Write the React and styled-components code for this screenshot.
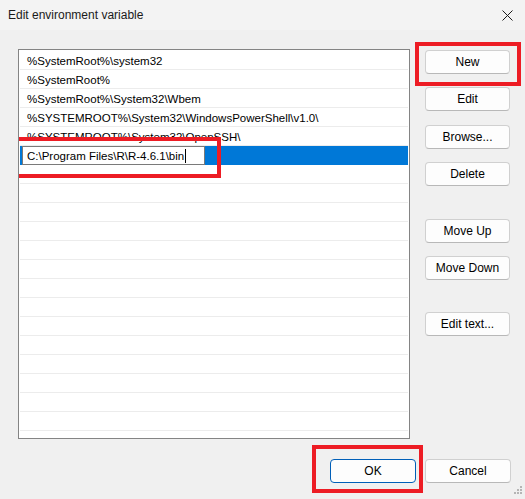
import styled, { createGlobalStyle } from "styled-components";

const GlobalStyle = createGlobalStyle`
  html, body {
    margin: 0;
    padding: 0;
    background: #f0f0f0;
  }
  * {
    box-sizing: border-box;
  }
`;

const PATHS = [
  "%SystemRoot%\\system32",
  "%SystemRoot%",
  "%SystemRoot%\\System32\\Wbem",
  "%SYSTEMROOT%\\System32\\WindowsPowerShell\\v1.0\\",
  "%SYSTEMROOT%\\System32\\OpenSSH\\",
];

const EMPTY_ROWS = 14;

// Dialog window
const Window = styled.div`
  width: 525px;
  height: 499px;
  display: flex;
  flex-direction: column;
  background: #f0f0f0;
  font-family: "Liberation Sans", Arial, sans-serif;
  font-size: 12px;
  color: #000;
  position: relative;
  overflow: hidden;
`;

const TitleBar = styled.div`
  height: 30px;
  display: flex;
  align-items: center;
  justify-content: space-between;
  padding: 0 12px 0 8px;
  background: #f3f3f3;
`;

const Title = styled.span`
  color: #1a1a1a;
`;

const CloseIcon = () => (
  <svg width="11" height="11" viewBox="0 0 11 11">
    <path d="M0.5 0.5 L10.5 10.5 M10.5 0.5 L0.5 10.5" stroke="#1c1c1c" strokeWidth="1" />
  </svg>
);

const Body = styled.div`
  flex: 1;
  display: flex;
  flex-direction: column;
  padding: 19px 14px 0 18px;
`;

const Main = styled.div`
  display: flex;
  gap: 15px;
`;

// Path list
const List = styled.div`
  width: 392px;
  height: 390px;
  border: 1px solid #848484;
  background: #fff;
  padding: 1px 1px 0 1px;
  overflow: hidden;
  font-size: 11.5px;
`;

const Row = styled.div`
  position: relative;
  height: 19px;
  display: flex;
  align-items: center;
  padding-left: 7px;
  padding-top: 1px;
  border-bottom: 1px solid #ececec;
  white-space: nowrap;
  background: ${(p) => (p.$selected ? "#0078d7" : "transparent")};
  ${(p) => p.$selected && "border-bottom-color: #0078d7; padding-top: 0;"}
`;

const EditField = styled.div`
  position: relative;
  width: 183px;
  height: 19px;
  margin-left: -5px;
  margin-top: 1px;
  padding-left: 4px;
  padding-top: 1px;
  display: flex;
  align-items: center;
  background: #fff;
  border: 1px solid #7a7a7a;
`;

const Caret = styled.span`
  display: inline-block;
  width: 1px;
  height: 14px;
  margin-left: 1px;
  background: #000;
`;

// Side and footer buttons
const ButtonColumn = styled.div`
  display: flex;
  flex-direction: column;
  padding-top: 1px;
`;

const Button = styled.button`
  width: ${(p) => p.$width || 85}px;
  height: 24px;
  margin-top: ${(p) => p.$gap || 0}px;
  background: #fdfdfd;
  border: 1px solid ${(p) => (p.$default ? "#005fb8" : "#d0d0d0")};
  border-bottom-color: ${(p) => (p.$default ? "#005fb8" : "#b8b8b8")};
  border-radius: 4px;
  font-family: inherit;
  font-size: 12px;
  color: #000;
  padding: 0;
`;

const Footer = styled.div`
  display: flex;
  justify-content: flex-end;
  gap: 9px;
  margin-top: 20px;
`;

// Red annotation frames
const Marked = styled.div`
  position: relative;
`;

const Frame = styled.span`
  position: absolute;
  top: ${(p) => p.$t}px;
  right: ${(p) => p.$r}px;
  bottom: ${(p) => p.$b}px;
  left: ${(p) => p.$l}px;
  border: 4px solid #ed1c24;
  pointer-events: none;
`;

const Grip = styled.svg`
  position: absolute;
  right: 3px;
  bottom: 5px;
`;

export default function App() {
  return (
    <>
      <GlobalStyle />
      <Window>
        <TitleBar>
          <Title>Edit environment variable</Title>
          <CloseIcon />
        </TitleBar>
        <Body>
          <Main>
            <List>
              {PATHS.map((p) => (
                <Row key={p}>{p}</Row>
              ))}
              <Row $selected>
                <Marked>
                  <EditField>
                    C:\Program Files\R\R-4.6.1\bin
                    <Caret />
                  </EditField>
                  <Frame $t={-8} $r={-16} $b={-13} $l={-18} />
                </Marked>
              </Row>
              {Array.from({ length: EMPTY_ROWS }, (_, i) => (
                <Row key={i} />
              ))}
            </List>
            <ButtonColumn>
              <Marked>
                <Button>New</Button>
                <Frame $t={-8} $r={-11} $b={-12} $l={-10} />
              </Marked>
              <Button $gap={13}>Edit</Button>
              <Button $gap={14}>Browse...</Button>
              <Button $gap={13}>Delete</Button>
              <Button $gap={33}>Move Up</Button>
              <Button $gap={13}>Move Down</Button>
              <Button $gap={32}>Edit text...</Button>
            </ButtonColumn>
          </Main>
          <Footer>
            <Marked>
              <Button $width={86} $default>OK</Button>
              <Frame $t={-14} $r={-7} $b={-10} $l={-18} />
            </Marked>
            <Button $width={86}>Cancel</Button>
          </Footer>
        </Body>
        <Grip width="8" height="8" viewBox="0 0 8 8">
          <rect x="6" y="0" width="2" height="2" fill="#b5b5b5" />
          <rect x="3" y="3" width="2" height="2" fill="#b5b5b5" />
          <rect x="6" y="3" width="2" height="2" fill="#b5b5b5" />
          <rect x="0" y="6" width="2" height="2" fill="#b5b5b5" />
          <rect x="3" y="6" width="2" height="2" fill="#b5b5b5" />
          <rect x="6" y="6" width="2" height="2" fill="#b5b5b5" />
        </Grip>
      </Window>
    </>
  );
}
